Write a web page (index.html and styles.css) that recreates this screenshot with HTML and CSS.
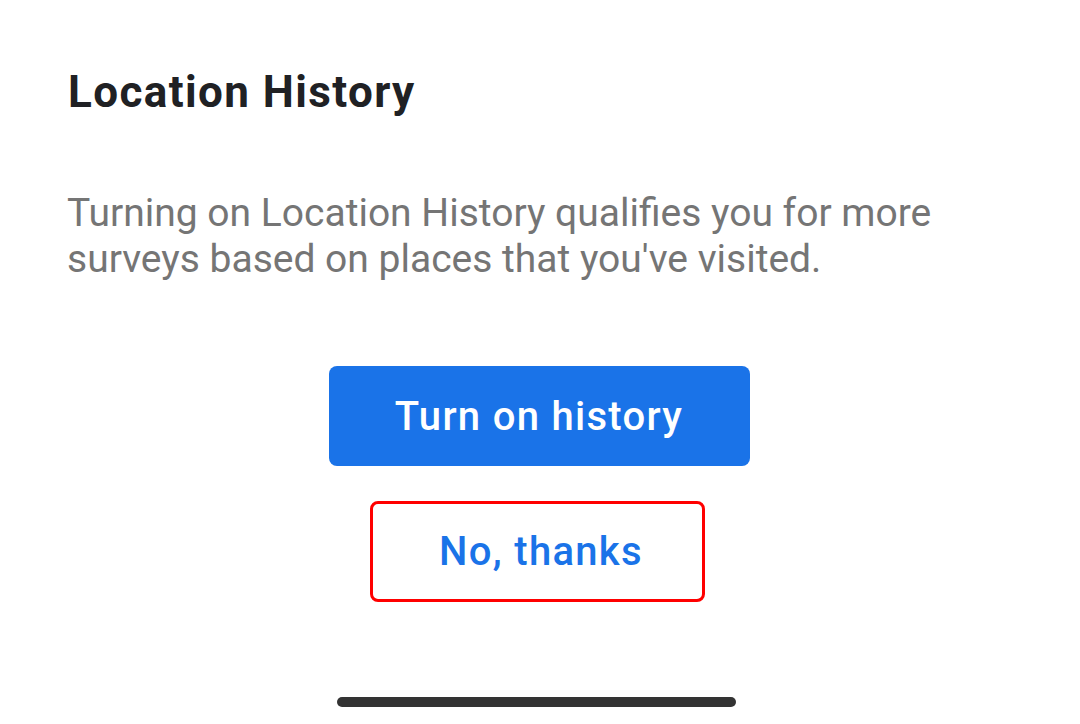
FILE: index.html
```html
<!DOCTYPE html>
<html lang="en">
<head>
  <meta charset="UTF-8">
  <title>Location History</title>
  <link rel="stylesheet" href="styles.css">
</head>
<body>
  <div class="sheet">
    <h2 class="title">Location History</h2>
    <p class="desc">Turning on Location History qualifies you for more surveys based on places that you've visited.</p>

    <div class="actions">
      <button class="btn btn-primary">Turn on history</button>
      <button class="btn btn-text">No, thanks</button>
    </div>
  </div>

  <div class="home-bar"></div>
</body>
</html>
```

FILE: styles.css
```css
html, body {
  margin: 0;
  padding: 0;
  background: #fff;
}
body {
  font-family: Roboto, "Noto Sans", Arial, sans-serif;
  width: 1080px;
  height: 724px;
  overflow: hidden;
  display: flex;
  flex-direction: column;
}
.sheet {
  padding: 0 67px;
  flex: 1;
}
.title {
  margin: 62px 0 0;
  padding-left: 1px;
  font-size: 44px;
  font-weight: 700;
  letter-spacing: 1.4px;
  color: #202124;
  line-height: 60px;
}
.desc {
  margin: 68px 0 0;
  font-size: 39px;
  line-height: 46px;
  color: #757575;
  max-width: 900px;
}
.actions {
  margin-top: 84px;
  display: flex;
  flex-direction: column;
  align-items: center;
  gap: 35px;
}
.btn {
  font-family: Roboto, "Noto Sans", Arial, sans-serif;
  font-size: 40px;
  font-weight: 500;
  letter-spacing: 1.3px;
  border-radius: 8px;
  height: 100px;
  cursor: pointer;
}
.btn-primary {
  width: 421px;
  background: #1a73e8;
  color: #fff;
  border: none;
  margin-left: -2px;
}
.btn-text {
  width: 335px;
  height: 101px;
  padding: 0 0 0 8px;
  background: #fff;
  color: #1a73e8;
  border: 3px solid #ff0000;
  margin-left: -6px;
}
.home-bar {
  width: 399px;
  height: 10px;
  border-radius: 5px;
  background: #333;
  margin: 0 0 17px 337px;
}
```
